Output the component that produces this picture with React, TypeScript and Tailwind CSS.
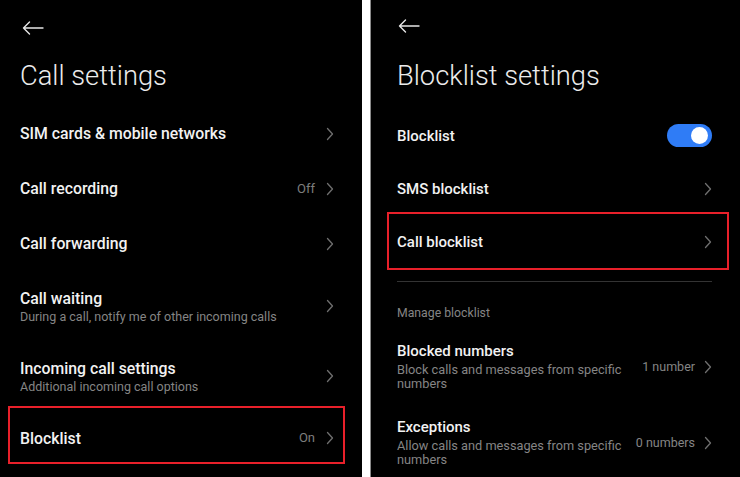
import React from "react";

const font = { fontFamily: "Roboto, 'Noto Sans', sans-serif" };

function BackArrow() {
  return (
    <svg width="22" height="14" viewBox="0 0 22 14" fill="none">
      <path d="M1.5 7H21M7.5 1L1.5 7L7.5 13" stroke="#e6e6e6" strokeWidth="1.4" strokeLinecap="round" strokeLinejoin="round" />
    </svg>
  );
}

function Chevron() {
  return (
    <svg width="8" height="14" viewBox="0 0 8 14" fill="none">
      <path d="M1.5 1.5L6.5 7L1.5 12.5" stroke="#6f6f6f" strokeWidth="1.3" strokeLinecap="round" strokeLinejoin="round" />
    </svg>
  );
}

function Row({
  title,
  sub,
  value,
  h,
  big,
  boxed,
  toggle,
}: {
  title: string;
  sub?: string;
  value?: string;
  h: string;
  big?: boolean;
  boxed?: "left" | "right";
  toggle?: boolean;
}) {
  return (
    <div className={`relative flex shrink-0 items-center justify-between ${h}`}>
      <div className={`flex min-w-0 flex-col ${big ? "" : "pt-[2px]"}`}>
        <div className={`${big ? "text-[15.8px]" : "text-[15px]"} font-medium leading-[19px] text-[#f2f2f2]`}>{title}</div>
        {sub && <div className="mt-[1px] text-[12.5px] leading-[15px] text-[#858585]">{sub}</div>}
      </div>
      {toggle ? (
        <div className="flex h-[23px] w-[45px] items-center justify-end rounded-full bg-[#2f7cf6] pr-[4px]">
          <div className="h-[17px] w-[17px] rounded-full bg-white" />
        </div>
      ) : (
        <div className="flex shrink-0 items-center gap-[11px]">
          {value && <span className="text-[13px] text-[#7d7d7d]">{value}</span>}
          <Chevron />
        </div>
      )}
      {boxed === "left" && (
        <div className="pointer-events-none absolute bottom-[1px] left-[-12px] right-[-11px] top-[-5px] border-[2.5px] border-[#e8202a]" />
      )}
      {boxed === "right" && (
        <div className="pointer-events-none absolute bottom-[-2px] left-[-10px] right-[-17px] top-[-3px] border-[2.5px] border-[#e8202a]" />
      )}
    </div>
  );
}

function SubRow({ title, sub, value, h }: { title: string; sub: string; value: string; h: string }) {
  return (
    <div className={`flex shrink-0 items-center justify-between ${h}`}>
      <div className="flex flex-col">
        <div className="text-[15px] font-medium leading-[19px] text-[#f2f2f2]">{title}</div>
        <div className="mt-[2px] w-[225px] text-[12.75px] leading-[14px] text-[#858585]">{sub}</div>
      </div>
      <div className="flex shrink-0 items-center gap-[9px] pt-[2px]">
        <span className="text-[12.5px] text-[#858585]">{value}</span>
        <Chevron />
      </div>
    </div>
  );
}

export default function App() {
  return (
    <div className="flex h-[477px] w-[740px] overflow-hidden bg-white" style={font}>
      {/* Left panel */}
      <div className="flex h-full w-[362px] flex-col overflow-hidden bg-black pl-[20px] pr-[28px]">
        <div className="flex h-[54px] shrink-0 items-center pl-[2px] pt-[1px]">
          <BackArrow />
        </div>
        <div className="h-[52px] shrink-0 pt-[6px] text-[27.3px] font-light leading-[32px] text-[#ececec]">Call settings</div>
        <Row title="SIM cards & mobile networks" h="h-[55px]" big />
        <Row title="Call recording" value="Off" h="h-[55px]" big />
        <Row title="Call forwarding" h="h-[55px]" big />
        <Row title="Call waiting" sub="During a call, notify me of other incoming calls" h="h-[70px]" big />
        <Row title="Incoming call settings" sub="Additional incoming call options" h="h-[70px]" big />
        <Row title="Blocklist" value="On" h="h-[54px]" boxed="left" big />
      </div>
      <div className="w-[8px] shrink-0 bg-white" />
      <div className="w-[1px] shrink-0 bg-[#8a8a8a]" />
      {/* Right panel */}
      <div className="flex h-full flex-1 flex-col overflow-hidden bg-black pl-[26px] pr-[28px]">
        <div className="flex h-[52px] shrink-0 items-center pl-[1px]">
          <BackArrow />
        </div>
        <div className="h-[56px] shrink-0 pt-[8px] text-[27.3px] font-light leading-[32px] text-[#ececec]">Blocklist settings</div>
        <Row title="Blocklist" h="h-[54px]" toggle />
        <Row title="SMS blocklist" h="h-[53px]" />
        <Row title="Call blocklist" h="h-[53px]" boxed="right" />
        <div className="mt-[13px] h-px w-full shrink-0 bg-[#333333]" />
        <div className="flex h-[46px] shrink-0 items-center pt-[16px] text-[12.25px] text-[#858585]">Manage blocklist</div>
        <SubRow title="Blocked numbers" sub="Block calls and messages from specific numbers" value="1 number" h="h-[76px]" />
        <SubRow title="Exceptions" sub="Allow calls and messages from specific numbers" value="0 numbers" h="h-[76px]" />
      </div>
    </div>
  );
}
